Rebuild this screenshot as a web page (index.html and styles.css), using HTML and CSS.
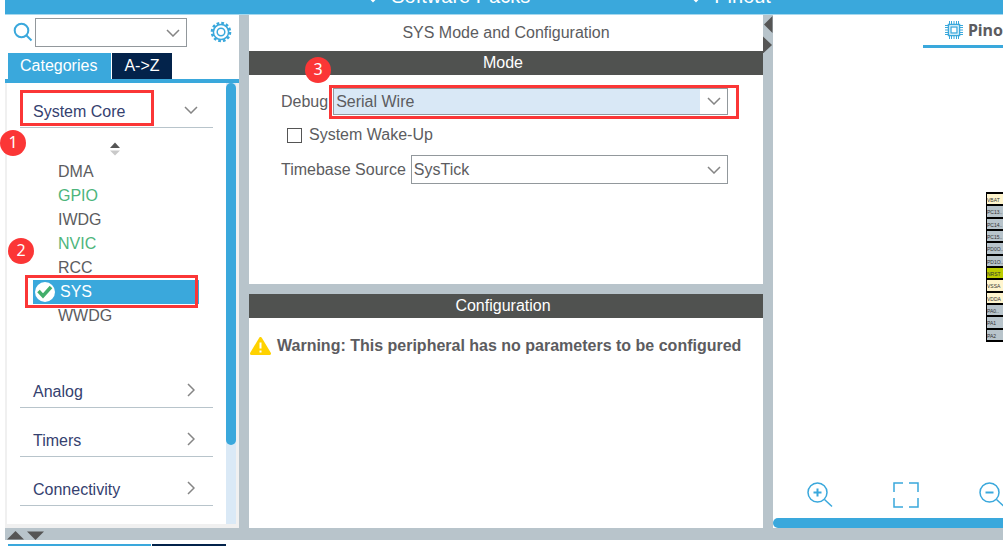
FILE: index.html
```html
<!DOCTYPE html>
<html lang="en">
<head>
    <meta charset="UTF-8">
    <meta name="viewport" content="width=device-width, initial-scale=1.0">
    <title>SYS Mode and Configuration</title>
    <link rel="stylesheet" href="styles.css">
</head>
<body>
    <nav class="topbar">
        <button class="menu-btn">
            <svg width="12" height="14" viewBox="0 0 12 14"><path d="M1 7l5 5 5-5" fill="none" stroke="currentColor" stroke-width="2"/></svg>
            Software Packs
        </button>
        <button class="menu-btn">
            <svg width="12" height="14" viewBox="0 0 12 14"><path d="M1 7l5 5 5-5" fill="none" stroke="currentColor" stroke-width="2"/></svg>
            Pinout
        </button>
    </nav>

    <main class="workspace">
        <!-- Categories -->
        <aside class="sidebar">
            <div class="search-row">
                <svg class="search-icon" width="20" height="20" viewBox="0 0 20 20"><circle cx="8.500" cy="8.500" r="6.800"/><path d="M13.500 13.500l5 5"/></svg>
                <div class="select-wrap search-box">
                    <select aria-label="Search"><option></option></select>
                    <svg class="chevron" width="14" height="8" viewBox="0 0 14 8"><path d="M1 1l6 6 6-6"/></svg>
                </div>
                <button class="gear-btn" aria-label="Settings">
                    <svg width="22" height="22" viewBox="0 0 22 22" fill="none" stroke="currentColor">
                        <circle cx="11" cy="11" r="9" stroke-width="2.600" stroke-dasharray="2.700 2.012"/>
                        <circle cx="11" cy="11" r="7.600" stroke-width="1.500"/>
                        <circle cx="11" cy="11" r="3.800" stroke-width="1.500"/>
                    </svg>
                </button>
            </div>
            <div class="tabs">
                <button class="tab active">Categories</button>
                <button class="tab">A-&gt;Z</button>
            </div>
            <div class="category-pane">
                <div class="categories">
                    <button class="category open">
                        System Core
                        <svg class="chevron" width="14" height="8" viewBox="0 0 14 8"><path d="M1 1l6 6 6-6"/></svg>
                        <span class="mark mark-core"></span>
                        <span class="badge badge-one">1</span>
                    </button>
                    <div class="peripherals">
                        <button class="sort-btn" aria-label="Sort">
                            <svg width="12" height="14" viewBox="0 0 12 14"><path d="M1 6l5-5.500L11 6z" fill="#555"/><path d="M1 8.500h10L6 13.500z" fill="#c9c9c9"/></svg>
                        </button>
                        <ul>
                            <li><a href="#">DMA</a></li>
                            <li><a href="#" class="enabled">GPIO</a></li>
                            <li><a href="#">IWDG</a></li>
                            <li><a href="#" class="enabled">NVIC</a></li>
                            <li><a href="#">RCC</a></li>
                            <li class="selected">
                                <a href="#">
                                    <svg width="20" height="20" viewBox="0 0 20 20"><circle cx="10" cy="10" r="10" fill="#fff"/><path d="M3.500 9l4.500 5 8-9" fill="none" stroke="#43ae6b" stroke-width="3.500"/></svg>
                                    SYS
                                </a>
                                <span class="mark mark-sys"></span>
                                <span class="badge badge-two">2</span>
                            </li>
                            <li><a href="#">WWDG</a></li>
                        </ul>
                    </div>
                    <button class="category">
                        Analog
                        <svg class="chevron" width="8" height="14" viewBox="0 0 8 14"><path d="M1 1l6 6-6 6"/></svg>
                    </button>
                    <button class="category">
                        Timers
                        <svg class="chevron" width="8" height="14" viewBox="0 0 8 14"><path d="M1 1l6 6-6 6"/></svg>
                    </button>
                    <button class="category">
                        Connectivity
                        <svg class="chevron" width="8" height="14" viewBox="0 0 8 14"><path d="M1 1l6 6-6 6"/></svg>
                    </button>
                </div>
                <div class="scroll-track"><div class="scroll-thumb"></div></div>
            </div>
        </aside>

        <div class="splitter"></div>

        <!-- Mode and configuration -->
        <section class="settings">
            <div class="panel mode-panel">
                <h1>SYS Mode and Configuration</h1>
                <h2>Mode</h2>
                <form class="mode-form">
                    <div class="field">
                        <label for="debug">Debug</label>
                        <div class="select-wrap highlighted">
                            <select id="debug"><option>Serial Wire</option></select>
                            <svg class="chevron" width="14" height="8" viewBox="0 0 14 8"><path d="M1 1l6 6 6-6"/></svg>
                            <span class="mark mark-debug"></span>
                            <span class="badge badge-three">3</span>
                        </div>
                    </div>
                    <div class="field check">
                        <input type="checkbox" id="wakeup">
                        <label for="wakeup">System Wake-Up</label>
                    </div>
                    <div class="field">
                        <label for="timebase">Timebase Source</label>
                        <div class="select-wrap">
                            <select id="timebase"><option>SysTick</option></select>
                            <svg class="chevron" width="14" height="8" viewBox="0 0 14 8"><path d="M1 1l6 6 6-6"/></svg>
                        </div>
                    </div>
                </form>
            </div>
            <div class="panel config-panel">
                <h2>Configuration</h2>
                <p class="warning">
                    <svg width="21" height="18" viewBox="0 0 21 18"><path d="M10.500 1.500L19.500 16.500h-18z" fill="#ffd200" stroke="#ffd200" stroke-width="3" stroke-linejoin="round"/><path d="M10.500 5.500v6M10.500 13.500v2" stroke="#fff" stroke-width="2"/></svg>
                    Warning: This peripheral has no parameters to be configured
                </p>
            </div>
        </section>

        <div class="splitter">
            <svg width="10" height="38" viewBox="0 0 10 38" fill="#555"><path d="M9.500 1v17L1 9.500z"/><path d="M0 21.500v17l9-8.500z"/></svg>
        </div>

        <!-- Pinout -->
        <section class="pinout">
            <button class="pinout-tab">
                <svg width="18" height="18" viewBox="0 0 18 18" fill="none" stroke="#3aa8dc">
                    <path d="M4.500 0v3M6.500 0v3M9 0v3M11.500 0v3M13.500 0v3M4.500 15v3M6.500 15v3M9 15v3M11.500 15v3M13.500 15v3M0 4.500h3M0 6.500h3M0 9h3M0 11.500h3M0 13.500h3M15 4.500h3M15 6.500h3M15 9h3M15 11.500h3M15 13.500h3"/>
                    <rect x="3.500" y="3.500" width="11" height="11" stroke-width="1.500"/>
                    <rect x="6" y="6" width="6" height="6" stroke-width="1.300"/>
                </svg>
                Pino
            </button>
            <div class="chip-view">
                <ol class="pins">
                    <li class="power">VBAT</li>
                    <li>PC13..</li>
                    <li>PC14..</li>
                    <li>PC15..</li>
                    <li>PD0O..</li>
                    <li>PD1O..</li>
                    <li class="reset">NRST</li>
                    <li class="power">VSSA</li>
                    <li class="power">VDDA</li>
                    <li>PA0..</li>
                    <li>PA1</li>
                    <li>PA2</li>
                </ol>
            </div>
            <div class="zoom-tools">
                <button aria-label="Zoom in">
                    <svg width="26" height="26" viewBox="0 0 26 26"><circle cx="10.500" cy="10.500" r="9.500"/><path d="M17.500 17.500l7.500 7"/><path d="M10.500 6.500v8M6.500 10.500h8" stroke-width="2"/></svg>
                </button>
                <button aria-label="Fit to window">
                    <svg width="26" height="26" viewBox="0 0 26 26"><path d="M10 1H1v9M16 1h9v9M25 16v9h-9M10 25H1v-9"/></svg>
                </button>
                <button aria-label="Zoom out">
                    <svg width="26" height="26" viewBox="0 0 26 26"><circle cx="10.500" cy="10.500" r="9.500"/><path d="M17.500 17.500l7.500 7"/><path d="M6.500 10.500h8" stroke-width="2"/></svg>
                </button>
            </div>
            <div class="h-scroll"></div>
        </section>
    </main>

    <div class="bottom-splitter">
        <svg width="38" height="9" viewBox="0 0 38 9" fill="#555"><path d="M0 8.500h17L8.500 0z"/><path d="M20 .5h17L28.500 9z"/></svg>
    </div>
    <div class="bottom-tabs">
        <div class="bottom-tab active"></div>
        <div class="bottom-tab"></div>
    </div>
</body>
</html>
```
FILE: styles.css
```css
/* General */
* {
    box-sizing: border-box;
}

body {
    margin: 0;
    padding-left: 5px;
    height: 100vh;
    display: flex;
    flex-direction: column;
    overflow: hidden;
    background: white;
    font-family: "Liberation Sans", Arial, sans-serif;
    font-size: 16px;
    line-height: 20px;
    color: #5c5c60;
}

button, select {
    font: inherit;
    color: inherit;
    background: none;
    border: none;
    padding: 0;
    margin: 0;
}

a {
    color: inherit;
    text-decoration: none;
}

svg {
    flex: none;
    display: block;
}

.chevron {
    fill: none;
    stroke: #858585;
    stroke-width: 1.5;
}

/* Top menu */
.topbar {
    flex: none;
    height: 15px;
    padding-left: 36%;
    padding-bottom: 6px;
    display: flex;
    align-items: flex-end;
    gap: 157px;
    overflow: hidden;
    background: #3aa8dc;
    border-bottom: 1px solid #a5d8ee;
}

.menu-btn {
    display: flex;
    align-items: center;
    gap: 12px;
    margin-left: 3px;
    color: white;
    font-size: 20px;
    line-height: 24px;
}

.workspace {
    flex: 1;
    min-height: 0;
    display: grid;
    grid-template-columns: 234px 10px minmax(0, 514fr) 10px minmax(0, 230fr);
}

.splitter {
    background: #b8c4cb;
}

/* Sidebar */
.sidebar {
    display: flex;
    flex-direction: column;
    min-height: 0;
}

.search-row {
    display: flex;
    align-items: center;
    height: 34px;
    padding: 0 7px 0 8px;
}

.search-icon {
    fill: none;
    stroke: #3aa8dc;
    stroke-width: 2;
}

.search-box {
    margin: 0 23px 0 2px;
}

.gear-btn {
    color: #3aa8dc;
}

.select-wrap {
    position: relative;
    flex: 1;
    display: flex;
}

.select-wrap select {
    appearance: none;
    width: 100%;
    height: 29px;
    padding: 0 30px 0 2px;
    border: 1px solid #92989c;
    border-radius: 0;
    background: white;
}

.select-wrap .chevron {
    position: absolute;
    top: 11px;
    right: 7px;
    pointer-events: none;
}

.highlighted .chevron {
    top: 9px;
}

.tabs {
    display: flex;
    gap: 1px;
    padding: 4px 3px 0;
    border-bottom: 4px solid #3aa8dc;
}

.tab {
    height: 26px;
    padding: 0 12px;
    color: white;
    background: #03234b;
}

.tab.active {
    padding: 0 14px 0 12px;
    background: #3aa8dc;
}

.category-pane {
    flex: 1;
    min-height: 0;
    display: flex;
    border: solid #f0f0f0;
    border-width: 0 3px 4px 2px;
}

.categories {
    flex: 1;
    padding: 0 13px;
}

.category {
    position: relative;
    display: flex;
    align-items: center;
    justify-content: space-between;
    width: 100%;
    height: 49px;
    padding: 18px 18px 0 13px;
    border-bottom: 1px solid #b8c4cb;
    color: #35416f;
}

.category.open {
    height: 45px;
    padding: 14px 15px 0 13px;
}

.category .chevron {
    margin-bottom: 4px;
}

.peripherals {
    height: 231px;
    padding: 14px 14px 0 13px;
}

.sort-btn {
    display: block;
    margin-left: 76px;
}

.peripherals ul {
    list-style: none;
    margin: 4px 0 0;
    padding: 0;
}

.peripherals li {
    position: relative;
    line-height: 24px;
}

.peripherals a {
    display: block;
    padding-left: 25px;
}

.peripherals .enabled {
    color: #4db57c;
}

.peripherals .selected a {
    display: flex;
    align-items: center;
    gap: 5px;
    padding-left: 2px;
    color: white;
    background: #3aa8dc;
}

.scroll-track {
    width: 10px;
    background: #dae9f6;
}

.scroll-thumb {
    height: 82%;
    border-radius: 5px;
    background: #3aa8dc;
}

/* Numbered marks */
.mark {
    position: absolute;
    border: 3px solid #fb3636;
    pointer-events: none;
}

.mark-core {
    inset: 7px 59px 1px 0;
}

.mark-sys {
    inset: -5px 1px -4px -8px;
    z-index: 1;
}

.mark-debug {
    inset: -3px -11px -4px -4px;
}

.badge {
    position: absolute;
    width: 26px;
    height: 26px;
    border-radius: 50%;
    background: #fb3636;
    color: white;
    font-family: "Noto Sans", sans-serif;
    font-size: 16px;
    line-height: 25px;
    text-align: center;
}

.badge-one {
    top: 47px;
    left: -20px;
}

.badge-two {
    top: -42px;
    left: -25px;
}

.badge-three {
    top: -31px;
    left: -28px;
}

/* Settings */
.settings {
    display: flex;
    flex-direction: column;
    gap: 10px;
    background: #b8c4cb;
}

.panel {
    background: white;
}

.mode-panel {
    height: 269px;
}

.config-panel {
    flex: 1;
}

h1, h2 {
    margin: 0;
    font-size: 16px;
    font-weight: normal;
    text-align: center;
}

h1 {
    line-height: 36px;
}

h2 {
    line-height: 24px;
    padding-right: 6px;
    color: white;
    background: #505250;
}

.mode-form {
    padding: 13px 35px 0 32px;
}

.field {
    display: flex;
    align-items: center;
    gap: 5px;
}

.highlighted select {
    height: 27px;
    background: linear-gradient(to left, white 27px, #d9e8f6 27px);
}

.check {
    gap: 7px;
    padding: 10px 6px;
}

.check input {
    appearance: none;
    width: 15px;
    height: 15px;
    margin: 0;
    border: 1px solid #555;
    background: white;
}

.check input:checked {
    background: #3aa8dc;
}

.warning {
    display: flex;
    align-items: center;
    gap: 6px;
    margin: 18px 1px;
    font-weight: bold;
    white-space: nowrap;
}

/* Pinout */
.pinout {
    display: flex;
    flex-direction: column;
    overflow: hidden;
}

.pinout-tab {
    align-self: flex-end;
    flex: none;
    display: flex;
    align-items: center;
    gap: 5px;
    height: 33px;
    padding-left: 22px;
    border-bottom: 3px solid #3aa8dc;
    font-family: "Noto Sans", sans-serif;
    font-size: 16px;
    font-weight: bold;
}

.chip-view {
    flex: 1;
    display: flex;
    justify-content: flex-end;
    padding-top: 144px;
}

.pins {
    list-style: none;
    margin: 0;
    padding: 2px 0 2px 1px;
    width: 17px;
    height: 150px;
    display: grid;
    grid-auto-rows: minmax(0, 1fr);
    gap: 2px;
    background: black;
}

.pins li {
    background: #b8c4cb;
    color: #333;
    font-size: 5px;
    line-height: 12px;
    white-space: nowrap;
}

.pins .power {
    background: #fff5ce;
}

.pins .reset {
    background: #bccc00;
}

.zoom-tools {
    display: flex;
    justify-content: flex-end;
    gap: 60px;
    margin-right: -2px;
    padding-bottom: 10px;
}

.zoom-tools svg {
    fill: none;
    stroke: #3aa8dc;
    stroke-width: 1.5;
}

.h-scroll {
    height: 10px;
    border-radius: 5px 0 0 5px;
    background: #3aa8dc;
}

/* Bottom */
.bottom-splitter {
    flex: none;
    height: 12px;
    padding: 3px 2px 0;
    background: #b8c4cb;
}

.bottom-tabs {
    flex: none;
    display: flex;
    gap: 1px;
    padding: 4px 3px 0;
}

.bottom-tab {
    width: 74px;
    height: 2px;
    background: #03234b;
}

.bottom-tab.active {
    width: 143px;
    background: #3aa8dc;
}
```
